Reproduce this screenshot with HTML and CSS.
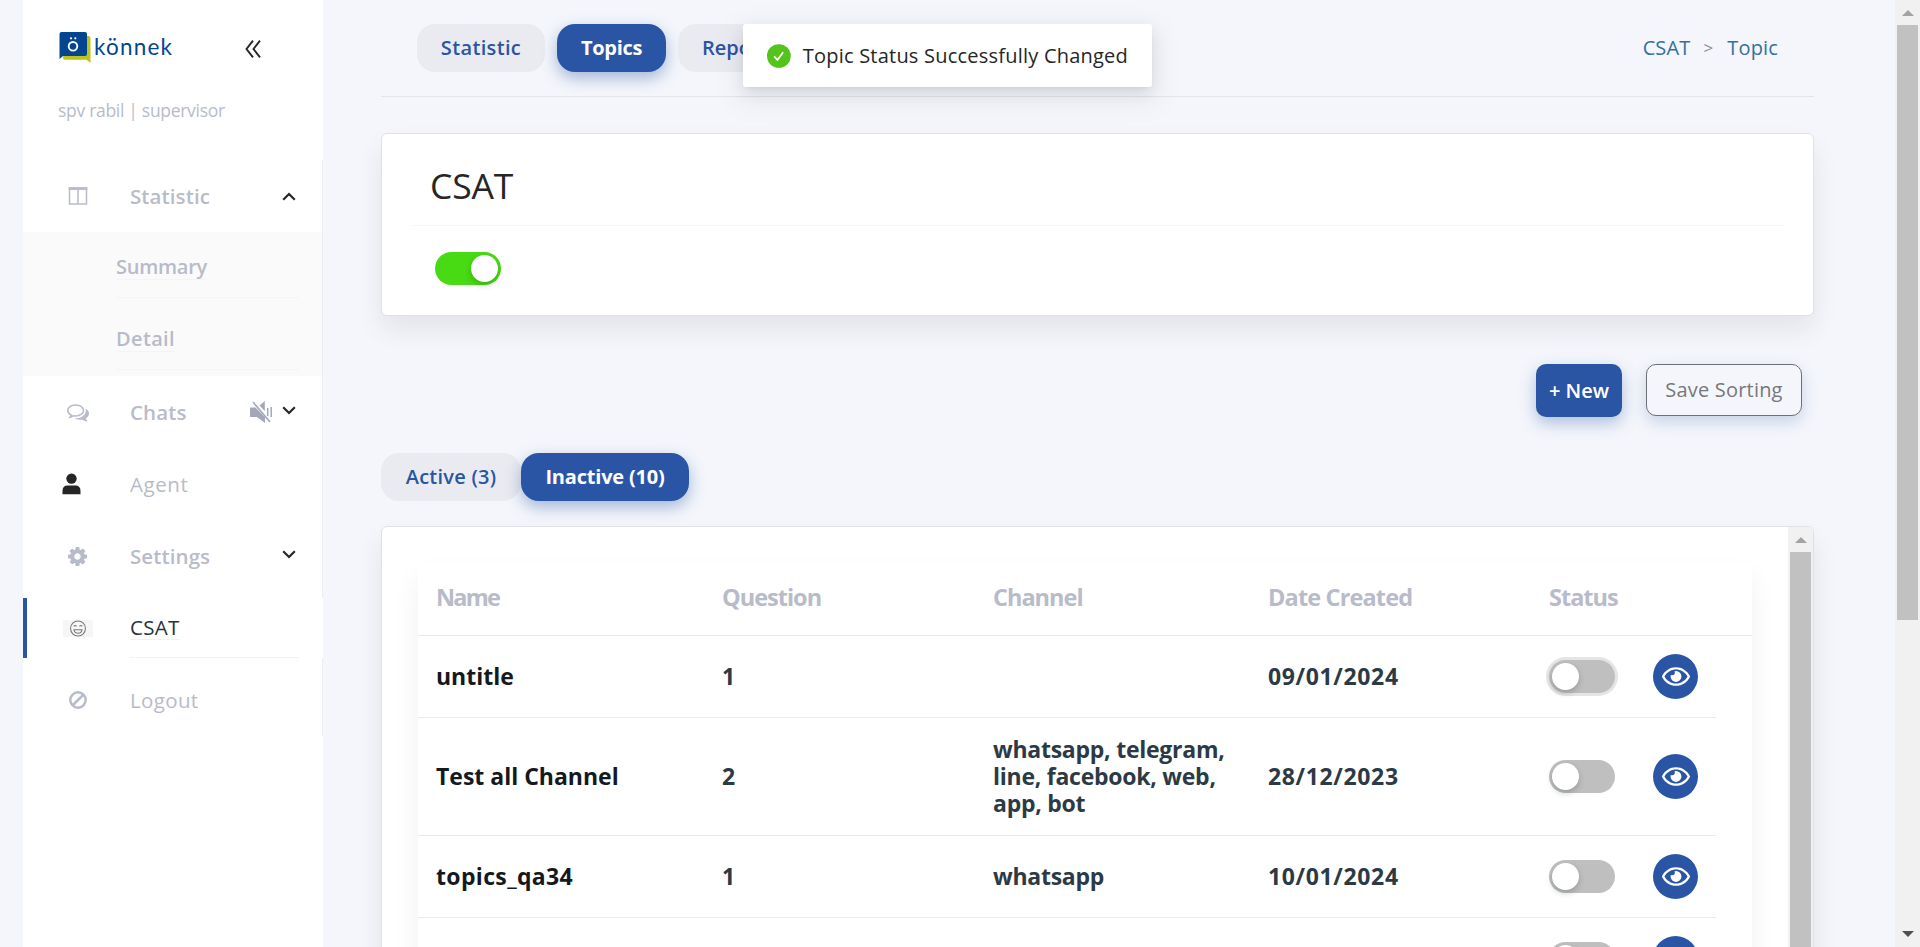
FILE: index.html
```html
<!DOCTYPE html>
<html lang="en">
<head>
<meta charset="utf-8">
<title>CSAT Topics</title>
<link rel="stylesheet" href="styles.css">
</head>
<body>
<svg class="defs" width="0" height="0">
  <symbol id="eye" viewBox="0 0 576 512"><path d="M288 144a110.94 110.94 0 0 0-31.240 5 55.400 55.400 0 0 1 7.240 27 56 56 0 0 1-56 56 55.400 55.400 0 0 1-27-7.240A111.710 111.710 0 1 0 288 144zm284.520 97.400C518.290 135.590 410.930 64 288 64S57.680 135.640 3.480 241.410a32.350 32.350 0 0 0 0 29.190C57.710 376.410 165.070 448 288 448s230.320-71.640 284.520-177.410a32.350 32.350 0 0 0 0-29.190zM288 400c-98.650 0-189.090-55-237.930-144C98.910 167 189.340 112 288 112s189.090 55 237.930 144C477.100 345 386.660 400 288 400z"/></symbol>
  <symbol id="chevron" viewBox="0 0 14 9"><path d="M1.200 1.200 7 7l5.800-5.800" fill="none" stroke="currentColor" stroke-width="2.200"/></symbol>
</svg>
<div class="app">
  <aside class="sidebar">
    <div class="brand">
      <svg class="brand-mark" viewBox="0 0 32 31" width="32" height="31">
        <path d="M6 4h23.500a2 2 0 0 1 2 2v25l-4-3.200H6a2 2 0 0 1-2-2z" fill="#bcc41c"/>
        <path d="M2.500 0h23.500a2 2 0 0 1 2 2v20a2 2 0 0 1-2 2H4L.5 27V2a2 2 0 0 1 2-2z" fill="#04458f"/>
        <circle cx="14" cy="14.300" r="4.300" fill="none" stroke="#fff" stroke-width="1.900"/>
        <circle cx="12" cy="6.300" r="1.100" fill="#fff"/><circle cx="16.300" cy="6.300" r="1.100" fill="#fff"/>
      </svg>
      <span class="brand-name">könnek</span>
      <svg class="collapse" viewBox="0 0 16 18" width="16" height="18"><path d="M8 .7 1.500 9 8 17.300M15 .7 8.500 9l6.500 8.300" fill="none" stroke="#262626" stroke-width="1.900"/></svg>
    </div>
    <p class="user">spv rabil | supervisor</p>
    <nav>
      <a class="item">
        <span class="icon"><svg viewBox="0 0 20 18" width="20" height="18"><path d="M1.500 1h17v16h-17zM10 2v15" fill="none" stroke="currentColor" stroke-width="1.500"/><path d="M.7 .3h18.600v2.700H.7z" fill="currentColor"/></svg></span>
        <span class="label medium">Statistic</span>
        <svg class="caret up"><use href="#chevron"/></svg>
      </a>
      <div class="submenu">
        <a class="subitem"><span class="sublabel">Summary</span></a>
        <a class="subitem"><span class="sublabel detail">Detail</span></a>
      </div>
      <a class="item">
        <span class="icon comments"><svg viewBox="0 0 1792 1792" width="22" height="22"><path fill="currentColor" d="M704 384q-153 0-286 52t-211.500 141-78.500 191q0 82 53 158t149 132l97 56-35 84q34-20 62-39l44-31 53 10q78 14 153 14 153 0 286-52t211.500-141 78.500-191-78.500-191-211.500-141-286-52zm0-128q191 0 353.500 68.500t256.500 186.500 94 257-94 257-256.500 186.500-353.500 68.500q-86 0-176-16-124 88-278 128-36 9-86 16h-3q-11 0-20.500-8t-11.500-21q-1-3-1-6.500t.5-6.500 2-6l2.500-5 3.500-5.500 4-5 4.500-5 4-4.500q5-6 23-25t26-29.500 22.500-29 25-38.500 20.500-44q-124-72-195-177t-71-224q0-139 94-257t256.500-186.500 353.500-68.500zm822 1169q10 24 20.500 44t25 38.500 22.500 29 26 29.500 23 25q1 1 4 4.500t4.500 5 4 5 3.500 5.500l2.500 5 2 6 .5 6.500-1 6.500q-3 14-13 22t-22 7q-50-7-86-16-154-40-278-128-90 16-176 16-271 0-472-132 58 4 88 4 161 0 309-45t264-129q125-92 192-212t67-254q0-77-23-152 129 71 204 178t75 230q0 120-71 224.500t-195 176.500z"/></svg></span>
        <span class="label medium chats">Chats</span>
        <svg class="mute" viewBox="0 0 22 22" width="22" height="22"><path d="M0 6.500h5.500l9.500 9.800V22l-8-6H0zM9.500 4.500 14.800 0v10z" fill="#a3a7b8"/><path d="m3 1 17 20" stroke="#a3a7b8" stroke-width="1.600"/><path d="M17.700 7v8M21.200 6v10" stroke="#a3a7b8" stroke-width="1.500"/></svg>
        <svg class="caret"><use href="#chevron"/></svg>
      </a>
      <a class="item">
        <span class="icon person"><svg viewBox="0 0 19 22" width="19" height="22"><circle cx="9.500" cy="5.600" r="5.200" fill="#262626"/><path d="M.5 21.300V18q0-5.500 5-5.500h8q5 0 5 5.500v3.300z" fill="#262626"/></svg></span>
        <span class="label agent">Agent</span>
      </a>
      <a class="item tall">
        <span class="icon"><svg viewBox="128 128 1536 1536" width="19" height="19"><path fill="currentColor" d="M1152 896q0-106-75-181t-181-75-181 75-75 181 75 181 181 75 181-75 75-181zm512-109v222q0 12-8 23t-20 13l-185 28q-19 54-39 91 35 50 107 138 10 12 10 25t-9 23q-27 37-99 108t-94 71q-12 0-26-9l-138-108q-44 23-91 38-16 136-29 186-7 28-36 28h-222q-14 0-24.500-8.500t-11.500-21.500l-28-184q-49-16-90-37l-141 107q-10 9-25 9-14 0-25-11-126-114-165-168-7-10-7-23 0-12 8-23 15-21 51-66.500t54-70.500q-27-50-41-99l-183-27q-13-2-21-12.500t-8-23.500v-222q0-12 8-23t19-13l186-28q14-46 39-92-40-57-107-138-10-12-10-24 0-10 9-23 26-36 98.500-107.500t94.500-71.500q13 0 26 10l138 107q44-23 91-38 16-136 29-186 7-28 36-28h222q14 0 24.500 8.500t11.500 21.500l28 184q49 16 90 37l142-107q9-9 24-9 13 0 25 10 129 119 165 170 7 8 7 22 0 12-8 23-15 21-51 66.500t-54 70.500q26 50 41 98l183 28q13 2 21 12.500t8 23.500z"/></svg></span>
        <span class="label medium settings">Settings</span>
        <svg class="caret"><use href="#chevron"/></svg>
      </a>
      <a class="item active">
        <span class="icon face"><svg viewBox="0 0 16 16" width="16" height="16"><g fill="none" stroke="#777" stroke-width="1"><circle cx="8" cy="8" r="7"/><path d="M4 6q1.300-1.800 2.600 0M9.400 6q1.300-1.800 2.600 0M4.200 9.200h7.600q-.5 3.300-3.800 3.300t-3.800-3.300z"/></g></svg></span>
        <span class="active-body"><span class="label csat">CSAT</span></span>
      </a>
      <a class="item tall logout">
        <span class="icon ban"><svg viewBox="0 0 18 18" width="18" height="18"><circle cx="9" cy="9" r="7.700" fill="none" stroke="currentColor" stroke-width="2.500"/><path d="M14 4 4 14" stroke="currentColor" stroke-width="2.500"/></svg></span>
        <span class="label logout-label">Logout</span>
      </a>
    </nav>
  </aside>

  <main class="main">
    <header class="topbar">
      <div class="tabs">
        <a class="tab"><span class="t-stat">Statistic</span></a>
        <a class="tab selected w-topics"><span class="t-topics">Topics</span></a>
        <a class="tab report"><span>Report</span></a>
      </div>
      <div class="crumbs"><a>CSAT</a><span class="sep">&gt;</span><a>Topic</a></div>
    </header>
    <section class="card csat-card">
      <h1>CSAT</h1>
      <div class="csat-body"><span class="switch on"></span></div>
    </section>
    <div class="actions">
      <button class="btn primary">+ New</button>
      <button class="btn outline">Save Sorting</button>
    </div>
    <div class="filters">
      <a class="tab w-active"><span class="t-active">Active (3)</span></a>
      <a class="tab selected w-inactive"><span class="t-inactive">Inactive (10)</span></a>
    </div>
    <section class="card list-card">
      <div class="list-scroll">
        <div class="table">
          <div class="thead row"><span class="h-name">Name</span><span>Question</span><span>Channel</span><span class="h-date">Date Created</span><span>Status</span></div>
          <div class="row"><b>untitle</b><span>1</span><span></span><span class="date">09/01/2024</span><i class="switch focus"></i><i class="view"><svg><use href="#eye"/></svg></i></div>
          <div class="row multi"><b>Test all Channel</b><span>2</span><span class="chan">whatsapp, telegram,<br>line, facebook, web,<br>app, bot</span><span class="date">28/12/2023</span><i class="switch"></i><i class="view"><svg><use href="#eye"/></svg></i></div>
          <div class="row"><b class="wide">topics_qa34</b><span>1</span><span class="chan">whatsapp</span><span class="date">10/01/2024</span><i class="switch"></i><i class="view"><svg><use href="#eye"/></svg></i></div>
          <div class="row"><b></b><span></span><span></span><span></span><i class="switch"></i><i class="view"><svg><use href="#eye"/></svg></i></div>
        </div>
      </div>
      <div class="scrollbar inner"><span class="arrow-up"></span><span class="thumb"></span></div>
    </section>
  </main>

  <div class="scrollbar page"><span class="arrow-up"></span><span class="thumb"></span><span class="arrow-down"></span></div>
</div>
<div class="toast">
  <svg viewBox="0 0 24 24" width="24" height="24"><circle cx="12" cy="12" r="12" fill="#52c41a"/><path d="m7.200 12.300 3.400 3.700 5.700-7.700" fill="none" stroke="#fff" stroke-width="1.800"/></svg>
  <span>Topic Status Successfully Changed</span>
</div>
</body>
</html>
```
FILE: styles.css
```css
* { box-sizing: border-box; }
html, body { margin: 0; height: 947px; overflow: hidden; }
body { background: #f4f6fb; font-family: "Open Sans", "Noto Sans", sans-serif; font-size: 20px; color: #262626; white-space: nowrap; }
.defs { position: absolute; }
.app { display: flex; height: 947px; padding-left: 23px; }

/* Sidebar */
.sidebar { width: 300px; background: #fff; color: #b8bbc9; }
.brand { display: flex; align-items: flex-start; height: 98px; padding: 32px 0 0 36px; }
.brand-name { color: #04458f; font-family: Lato, sans-serif; font-size: 22.500px; line-height: 30px; letter-spacing: 1.200px; margin-left: 3px; width: 82px; }
.collapse { margin: 8px 0 0 69px; }
.user { margin: 0; height: 62px; padding-left: 35px; font-size: 17.500px; line-height: 24px; letter-spacing: -.3px; }
.item { display: flex; align-items: center; height: 72px; border-right: 1px solid #ecedf0; padding-right: 26px; }
.item.tall { height: 78px; padding-bottom: 6px; }
.item.tall.logout { padding: 6px 27px 0 0; }
.icon { width: 107px; height: 30px; padding-left: 45px; display: flex; align-items: center; flex: none; }
.icon svg { flex: none; }
.icon.comments { padding-left: 44px; }
.icon.person { padding-left: 39px; }
.icon.ban { padding-left: 46px; }
.label { font-size: 20.500px; line-height: 30px; }
.agent { letter-spacing: .55px; }
.logout-label { letter-spacing: .35px; }
.medium { font-weight: 600; letter-spacing: .1px; }
.caret { width: 14px; height: 9px; color: #262626; margin: 0 0 3px auto; }
.caret.up { transform: scaleY(-1); margin-bottom: 0; }
.mute { margin-left: auto; }
.mute + .caret { margin-left: 10px; }
.submenu { background: #fafafa; border-right: 1px solid #ecedf0; padding-left: 93px; height: 144px; }
.subitem { display: block; height: 72px; padding-top: 20px; }
.subitem::after { content: ""; display: block; width: 183px; height: 1px; background: #f5f5f6; margin-top: 17px; }
.sublabel { display: inline-block; height: 28px; font-size: 20px; font-weight: 600; line-height: 30px; border-bottom: 1px solid #f4f4f6; vertical-align: top; letter-spacing: -.25px; }
.sublabel.detail { letter-spacing: .35px; }
.item.active { height: 60px; border-right: 0; border-left: 4px solid #2a55a5; padding-right: 0; }
.active .face { padding-left: 36px; width: 103px; }
.face svg { width: 30px; height: 17px; background: #f6f6f6; }
.active-body { width: 169px; height: 60px; border-bottom: 1px solid #f2f2f4; padding-top: 14px; }
.csat { color: #263238; display: inline-block; height: 28px; border-bottom: 1px solid #f2f2f4; vertical-align: top; font-weight: 500; font-size: 20.500px; line-height: 31px; letter-spacing: .3px; }

/* Main column */
.main { width: 1491px; padding-left: 58px; flex: 1; overflow: hidden; }
.topbar { width: 1433px; height: 97px; border-bottom: 1px solid #e3e5ea; display: flex; justify-content: space-between; padding: 24px 36px 0 36px; }
.tabs { display: flex; gap: 12px; }
.tab { display: flex; align-items: center; justify-content: center; width: 128px; height: 48px; border-radius: 18px; background: #eaebf0; color: #2a55a5; font-weight: 600; font-size: 20px; padding-bottom: 2px; }
.tab.selected { background: #2a55a5; color: #fff; font-weight: 700; box-shadow: 0 6px 16px rgba(42,85,165,.4); }
.w-topics { width: 109px; }
.t-stat { letter-spacing: .35px; }
.t-topics { letter-spacing: -.3px; }
.tab.report { justify-content: flex-start; padding-left: 24px; }
.t-inactive { letter-spacing: -.2px; }
.t-active { letter-spacing: .25px; }
.crumbs { display: flex; align-items: center; height: 46px; color: #33719b; letter-spacing: .15px; }
.sep { color: #8a8d94; font-size: 17px; margin: 0 14px 0 13px; }
.card { width: 1433px; background: #fff; border: 1px solid #dfe1e5; border-radius: 6px; box-shadow: 0 14px 26px rgba(20,20,40,.08); }
.csat-card { margin-top: 36px; height: 183px; padding: 0 30px; }
h1 { margin: 0; height: 92px; border-bottom: 1px solid #f6f6f8; padding: 25px 0 0 18px; font-size: 35.500px; line-height: 52px; font-weight: 400; letter-spacing: -.2px; }
.csat-body { padding: 26px 0 0 23px; display: flex; }
.switch { display: block; width: 66px; height: 33px; border-radius: 17px; background: #bfbfbf; padding: 3px; }
.switch::after { content: ""; display: block; width: 27px; height: 27px; border-radius: 50%; background: #fff; box-shadow: 0 3px 6px rgba(0,35,11,.22); }
.switch.on { background: #48da13; }
.switch.on::after { margin-left: 33px; }
.switch.focus { box-shadow: 0 0 0 3px #e5e5e5; }
.actions { width: 1433px; display: flex; justify-content: flex-end; gap: 24px; padding: 48px 12px 0 0; height: 137px; }
.btn { border: 0; border-radius: 10px; font-family: inherit; font-size: 20px; padding: 0; box-shadow: 0 6px 16px rgba(42,85,165,.35); }
.primary { width: 86px; height: 53px; background: #2a55a5; color: #fff; font-weight: 600; }
.outline { width: 156px; height: 52px; background: #f4f6fb; border: 1px solid #6f6f73; color: #77787c; font-weight: 400; box-shadow: 0 6px 16px rgba(42,85,165,.22); padding-bottom: 2px; letter-spacing: .2px; }
.filters { display: flex; margin-bottom: 25px; }
.w-active { width: 140px; }
.w-inactive { width: 168px; }
.list-card { display: flex; height: 500px; }
.list-scroll { width: 1406px; padding: 36px 0 0 36px; }
.table { width: 1334px; height: 464px; background: #fff; box-shadow: 0 14px 26px rgba(20,20,40,.06); font-weight: 700; color: #2c3a45; font-size: 23px; }
.row { display: grid; grid-template-columns: 286px 271px 275px 281px 104px 45px; align-items: center; width: 1298px; height: 82px; padding-left: 18px; border-bottom: 1px solid #e8e9ea; line-height: 27px; }
.row.multi { height: 118px; }
.row.thead { width: 1334px; height: 73px; padding-bottom: 4px; color: #b8bbc9; font-size: 23.500px; letter-spacing: -1px; }
.row .h-name { letter-spacing: -1.800px; }
.row .h-date { letter-spacing: -.85px; }
.row b { font-weight: 700; color: #15191d; }
.row .wide { letter-spacing: .35px; }
.row .date { letter-spacing: .65px; }
.row .chan { letter-spacing: -.25px; }
.view { display: flex; width: 45px; height: 45px; border-radius: 50%; background: #2a55a5; align-items: center; justify-content: center; }
.view svg { width: 28px; height: 25px; fill: #fff; margin-bottom: 1px; }

/* Scrollbars */
.scrollbar { width: 25px; background: #f1f1f1; display: flex; flex-direction: column; align-items: center; flex: none; }
.arrow-up { border: 6px solid transparent; border-top: 0; border-bottom-color: #a3a3a3; margin: 10px 0 9px; }
.thumb { width: 21px; height: 595px; background: #c1c1c1; }
.inner { border-top-right-radius: 5px; }
.inner .thumb { height: 450px; }
.arrow-down { border: 6px solid transparent; border-bottom: 0; border-top-color: #505050; margin: auto 0 10px; }

/* Notification floating above the page */
.toast { position: absolute; left: 743px; top: 24px; width: 409px; height: 63px; display: flex; align-items: center; gap: 12px; padding: 0 24px; background: #fff; border-radius: 3px; box-shadow: 0 9px 28px 8px rgba(0,0,0,.05), 0 6px 16px rgba(0,0,0,.08), 0 3px 6px -4px rgba(0,0,0,.12); letter-spacing: .22px; }
.toast span { padding-bottom: 1px; }
```
